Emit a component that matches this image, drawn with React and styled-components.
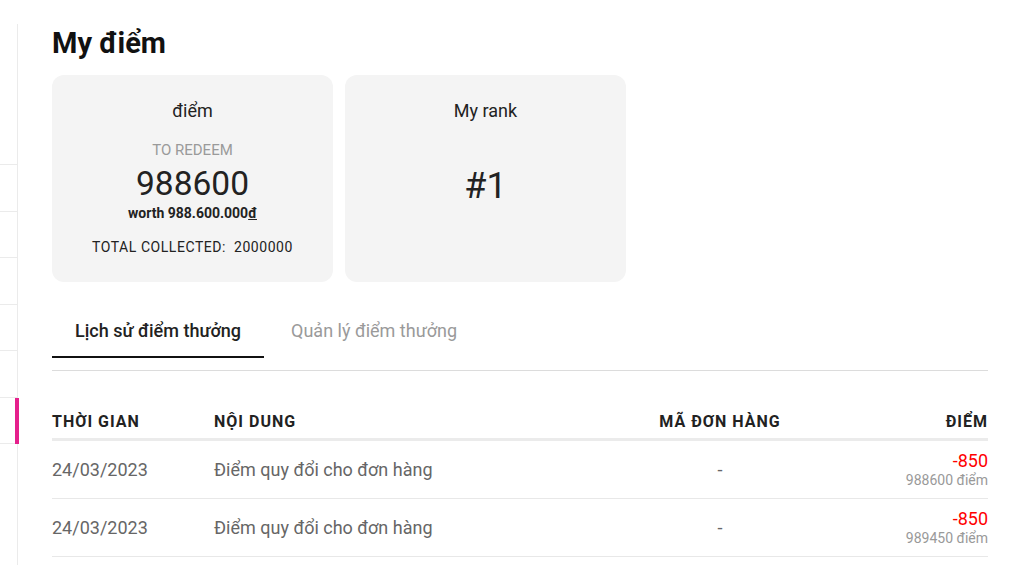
import React from "react";
import styled, { createGlobalStyle } from "styled-components";

const GlobalStyle = createGlobalStyle`
	* { box-sizing: border-box; }
	body {
		margin: 0;
		background: #fff;
		font-family: Roboto, "Liberation Sans", sans-serif;
		color: #222;
	}
`;

const history = [
	{ date: "24/03/2023", content: "Điểm quy đổi cho đơn hàng", order: "-", points: -850, balance: 988600 },
	{ date: "24/03/2023", content: "Điểm quy đổi cho đơn hàng", order: "-", points: -850, balance: 989450 },
];

const App = () => {
	return (
		<>
			<GlobalStyle />
			<Page>
				<Sidebar>
					<SideHead />
					{[0, 1, 2, 3, 4, 5].map((i) => (
						<SideItem key={i} active={i === 5} />
					))}
				</Sidebar>
				<Main>
					<Title>My điểm</Title>
					<Cards>
						<Card>
							<CardLabel>điểm</CardLabel>
							<SubLabel>TO REDEEM</SubLabel>
							<BigNumber>988600</BigNumber>
							<Worth>
								worth 988.600.000<u>đ</u>
							</Worth>
							<Total>TOTAL COLLECTED:&nbsp; 2000000</Total>
						</Card>
						<Card>
							<CardLabel>My rank</CardLabel>
							<Rank>#1</Rank>
						</Card>
					</Cards>
					<TabBar>
						<Tab active>Lịch sử điểm thưởng</Tab>
						<Tab>Quản lý điểm thưởng</Tab>
					</TabBar>
					<Table>
						<HeadRow>
							<Cell>Thời gian</Cell>
							<Cell>Nội dung</Cell>
							<Cell align="center">Mã đơn hàng</Cell>
							<Cell align="right">Điểm</Cell>
						</HeadRow>
						{history.map((row, index) => (
							<Row key={index}>
								<Cell>{row.date}</Cell>
								<Cell>{row.content}</Cell>
								<Cell align="center">{row.order}</Cell>
								<Cell align="right">
									<Points negative={row.points < 0}>{row.points}</Points>
									<Balance>{row.balance} điểm</Balance>
								</Cell>
							</Row>
						))}
					</Table>
				</Main>
			</Page>
		</>
	);
};

const Page = styled.div`
	display: flex;
	min-height: 565px;
`;

const Sidebar = styled.div`
	width: 18px;
	flex-shrink: 0;
	margin-top: 24px;
	border-right: 1px solid #ebebeb;
`;

const SideHead = styled.div`
	height: 141px;
	border-bottom: 1px solid #ebebeb;
`;

const SideItem = styled.div`
	position: relative;
	height: 46.5px;
	border-bottom: 1px solid #ebebeb;
	&::after {
		content: "";
		display: ${({ active }) => (active ? "block" : "none")};
		position: absolute;
		top: 0;
		bottom: -1px;
		right: -2px;
		width: 4px;
		background: #e5208c;
	}
`;

const Main = styled.div`
	flex: 1;
	padding: 26px 37px 0 34px;
`;

const Title = styled.h1`
	margin: 0 0 15px;
	font-size: 29px;
	line-height: 34px;
	font-weight: 700;
	color: #111;
`;

const Cards = styled.div`
	display: flex;
	gap: 12px;
`;

const Card = styled.div`
	width: 281px;
	height: 207px;
	background: #f4f4f4;
	border-radius: 12px;
	padding-top: 24px;
	display: flex;
	flex-direction: column;
	align-items: center;
	text-align: center;
`;

const CardLabel = styled.div`
	font-size: 18px;
	line-height: 24px;
	color: #222;
`;

const SubLabel = styled.div`
	margin-top: 17px;
	font-size: 15px;
	line-height: 20px;
	color: #9a9a9a;
`;

const BigNumber = styled.div`
	margin-top: 5px;
	font-size: 33.5px;
	line-height: 38px;
	color: #222;
`;

const Worth = styled.div`
	margin-top: 1px;
	font-size: 14px;
	line-height: 18px;
	font-weight: 700;
	color: #222;
`;

const Total = styled.div`
	margin-top: 15px;
	font-size: 14px;
	line-height: 20px;
	letter-spacing: 0.55px;
	color: #222;
`;

const Rank = styled.div`
	margin-top: 41px;
	font-size: 36px;
	line-height: 44px;
	color: #222;
`;

const TabBar = styled.div`
	display: flex;
	gap: 4px;
	margin-top: 20px;
	padding-bottom: 12px;
	border-bottom: 1px solid #dcdcdc;
`;

const Tab = styled.div`
	padding: 17px 23px 13px;
	font-size: 18px;
	line-height: 24px;
	font-weight: ${({ active }) => (active ? 500 : 400)};
	color: ${({ active }) => (active ? "#222" : "#9a9a9a")};
	border-bottom: 2px solid ${({ active }) => (active ? "#111" : "transparent")};
`;

const Table = styled.div`
	margin-top: 41px;
`;

const grid = `
	display: grid;
	grid-template-columns: 162px 1fr 160px 188px;
	align-items: center;
`;

const HeadRow = styled.div`
	${grid}
	padding-bottom: 6px;
	border-bottom: 3px solid #ebebeb;
	font-size: 16px;
	line-height: 20px;
	font-weight: 700;
	letter-spacing: 1px;
	text-transform: uppercase;
	color: #222;
`;

const Row = styled.div`
	${grid}
	height: 58px;
	border-bottom: 1px solid #e8e8e8;
	font-size: 18px;
	line-height: 22px;
	color: #666;
`;

const Cell = styled.div`
	text-align: ${({ align }) => align || "left"};
`;

const Points = styled.div`
	font-size: 18px;
	line-height: 21px;
	color: ${({ negative }) => (negative ? "#ff0000" : "#1a9c3c")};
`;

const Balance = styled.div`
	font-size: 14px;
	line-height: 19px;
	color: #999;
`;

export default App;
